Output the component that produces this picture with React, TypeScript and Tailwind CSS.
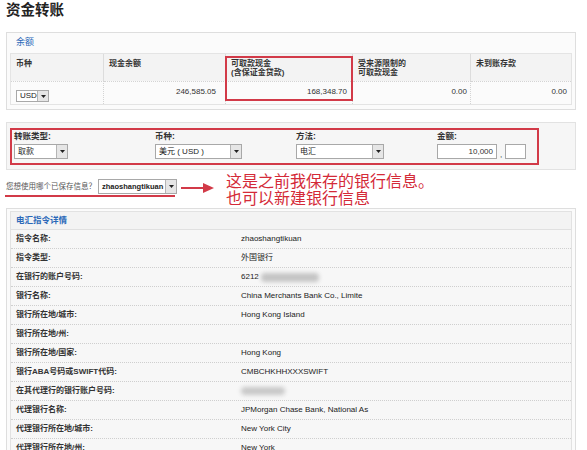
import React from 'react';

const FONT = "font-['Liberation_Sans','Noto_Sans_CJK_SC',sans-serif]";

function Arrow() {
  return (
    <div className="flex w-[11px] shrink-0 items-center justify-center border-l border-[#b5b5b5] bg-[#e6e6e6]">
      <svg width="5" height="3" viewBox="0 0 5 3">
        <polygon points="0,0 5,0 2.5,3" fill="#222" />
      </svg>
    </div>
  );
}

function Select({ value, className, bold }: { value: string; className: string; bold?: boolean }) {
  return (
    <div className={`flex items-stretch border border-[#a8a8a8] bg-white ${className}`}>
      <div className={`flex flex-1 items-center overflow-hidden whitespace-nowrap pl-[3px] text-[#222] ${bold ? 'text-[7.5px] font-bold' : 'text-[8px]'}`}>
        {value}
      </div>
      <Arrow />
    </div>
  );
}

const rows: { label: string; value: React.ReactNode }[] = [
  { label: '指令名称:', value: 'zhaoshangtikuan' },
  { label: '指令类型:', value: '外国银行' },
  {
    label: '在银行的账户号码:',
    value: (
      <div className="flex items-center">
        <span>6212</span>
        <div className="ml-[2px] h-[9px] w-[58px] rounded-sm bg-[#c4c4c4] blur-[2px]" />
      </div>
    ),
  },
  { label: '银行名称:', value: 'China Merchants Bank Co., Limite' },
  { label: '银行所在地/城市:', value: 'Hong Kong Island' },
  { label: '银行所在地/州:', value: '' },
  { label: '银行所在地/国家:', value: 'Hong Kong' },
  { label: '银行ABA号码或SWIFT代码:', value: 'CMBCHKHHXXXSWIFT' },
  {
    label: '在其代理行的银行账户号码:',
    value: <div className="h-[8px] w-[44px] rounded-sm bg-[#c8c8c8] blur-[2px]" />,
  },
  { label: '代理银行名称:', value: 'JPMorgan Chase Bank, National As' },
  { label: '代理银行所在地/城市:', value: 'New York City' },
  { label: '代理银行所在地/州:', value: 'New York' },
];

export default function App() {
  return (
    <div className={`h-[450px] w-[587px] overflow-hidden bg-white px-[6px] text-[#333] ${FONT}`}>
      {/* Title */}
      <div className="pt-[2px] text-[14.5px] font-bold leading-[16px] text-[#222]">资金转账</div>

      {/* Balance panel */}
      <div className="mt-[14px] w-[570px] border border-[#dedede] bg-[#fbfbfb] px-[3px] pb-[4px]">
        <div className="flex h-[20px] items-center pl-[6px] text-[9px] text-[#2a68b8]">余额</div>
        <div className="relative grid grid-cols-[93px_122px_127px_118px_1fr] border border-[#e4e4e4] text-[8px]">
          <div className="h-[27px] border-r border-[#dcdcdc] bg-[#f3f3f3] px-[5px] pt-[5px] font-bold leading-[9px]">币种</div>
          <div className="h-[27px] border-r border-[#dcdcdc] bg-[#f3f3f3] px-[5px] pt-[5px] font-bold leading-[9px]">现金余额</div>
          <div className="h-[27px] border-r border-[#dcdcdc] bg-[#f3f3f3] px-[5px] pt-[5px] font-bold leading-[9px]">
            可取款现金
            <br />
            (含保证金贷款)
          </div>
          <div className="h-[27px] border-r border-[#dcdcdc] bg-[#f3f3f3] px-[5px] pt-[5px] font-bold leading-[9px]">
            受来源限制的
            <br />
            可取款现金
          </div>
          <div className="h-[27px] bg-[#f3f3f3] px-[5px] pt-[5px] font-bold leading-[9px]">未到账存款</div>

          <div className="flex h-[23px] items-end border-r border-t border-dotted border-[#d4d4d4] px-[5px] pb-[2px]">
            <Select value="USD" className="h-[12px] w-[33px]" />
          </div>
          <div className="flex h-[23px] items-center justify-end border-r border-t border-dotted border-[#d4d4d4] pr-[9px] pb-[2px]">246,585.05</div>
          <div className="flex h-[23px] items-center justify-end border-r border-t border-dotted border-[#d4d4d4] pr-[5px] pb-[2px]">168,348.70</div>
          <div className="flex h-[23px] items-center justify-end border-r border-t border-dotted border-[#d4d4d4] pr-[3px] pb-[2px]">0.00</div>
          <div className="flex h-[23px] items-center justify-end border-t border-dotted border-[#d4d4d4] pr-[4px] pb-[2px]">0.00</div>

          <div className="pointer-events-none absolute left-[214px] top-[2px] h-[45px] w-[128px] border-2 border-[#d23a48]" />
        </div>
      </div>

      {/* Transfer form */}
      <div className="mt-[12px] w-[570px] border border-[#e2e2e2] bg-[#f6f6f6] pb-[4px] pl-[3px] pt-[5px]">
        <div className="grid h-[37px] w-[529px] grid-cols-[141px_141px_141px_1fr] border-2 border-[#d23a48] pl-[2px] pt-[2px] text-[8.5px]">
          <div>
            <div className="font-bold leading-[9px]">转账类型:</div>
            <Select value="取款" className="mt-[3px] h-[15px] w-[54px]" />
          </div>
          <div>
            <div className="font-bold leading-[9px]">币种:</div>
            <Select value="美元 ( USD )" className="mt-[3px] h-[15px] w-[87px]" />
          </div>
          <div>
            <div className="font-bold leading-[9px]">方法:</div>
            <Select value="电汇" className="mt-[3px] h-[15px] w-[88px]" />
          </div>
          <div>
            <div className="font-bold leading-[9px]">金额:</div>
            <div className="mt-[3px] flex items-end">
              <div className="flex h-[15px] w-[60px] items-center justify-end border border-[#a8a8a8] bg-white pr-[3px] text-[8px]">10,000</div>
              <span className="mx-[3px] text-[8px] leading-[9px]">,</span>
              <div className="h-[15px] w-[21px] border border-[#a8a8a8] bg-white" />
            </div>
          </div>
        </div>
      </div>

      {/* Saved info + annotation */}
      <div className="mt-[5px] flex h-[33px] items-start">
        <div className="pt-[4px]">
          <div className="flex h-[15px] items-center">
            <span className="mr-[3px] w-[89px] whitespace-nowrap text-[7.5px] text-[#555]">您想使用哪个已保存信息？</span>
            <Select value="zhaoshangtikuan" className="h-[15px] w-[79px]" bold />
          </div>
          <div className="ml-[-1px] mt-[1px] h-[2px] w-[170px] bg-[#d23a48]" />
        </div>
        <div className="ml-[4px] mt-[8px] flex items-center">
          <div className="h-[2px] w-[22px] bg-[#d23a48]" />
          <svg width="11" height="10" viewBox="0 0 11 10">
            <polygon points="0,0 11,5 0,10" fill="#d23a48" />
          </svg>
        </div>
        <div className="ml-[12px] mt-[-2px] text-[16px] leading-[17px] text-[#d42a38]">
          这是之前我保存的银行信息。
          <br />
          也可以新建银行信息
        </div>
      </div>

      {/* Wire instruction details */}
      <div className="w-[570px] border border-[#dedede] bg-[#fbfbfb] px-[3px] pt-[2px]">
        <div className="border border-[#e2e2e2]">
          <div className="flex h-[18px] items-center border-b border-[#e0e0e0] bg-[#f3f3f3] pl-[5px] text-[8.5px] font-bold text-[#2a68b8]">
            电汇指令详情
          </div>
          {rows.map((r, i) => (
            <div key={i} className="flex h-[19px] items-center border-b border-dotted border-[#cfcfcf] bg-[#f7f7f7] text-[8px]">
              <div className="w-[230px] shrink-0 pl-[5px] font-bold">{r.label}</div>
              <div className="text-[#222]">{r.value}</div>
            </div>
          ))}
        </div>
      </div>
    </div>
  );
}
